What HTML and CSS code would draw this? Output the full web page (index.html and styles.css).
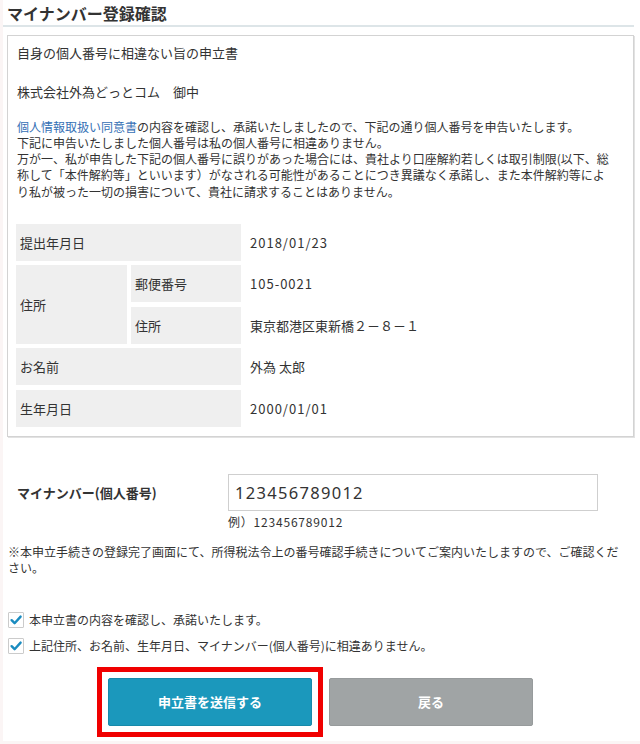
FILE: index.html
```html
<!DOCTYPE html>
<html lang="ja">
<head>
<meta charset="utf-8">
<title>マイナンバー登録確認</title>
<link rel="stylesheet" href="styles.css">
</head>
<body>
<div class="page">
  <h1 class="title">マイナンバー登録確認</h1>

  <section class="box">
    <p class="doc-title">自身の個人番号に相違ない旨の申立書</p>
    <p class="addressee">株式会社外為どっとコム　御中</p>
    <p class="statement"><a class="link" href="#">個人情報取扱い同意書</a>の内容を確認し、承諾いたしましたので、下記の通り個人番号を申告いたします。<br>下記に申告いたしました個人番号は私の個人番号に相違ありません。<br>万が一、私が申告した下記の個人番号に誤りがあった場合には、貴社より口座解約若しくは取引制限(以下、総称して「本件解約等」といいます）がなされる可能性があることにつき異議なく承諾し、また本件解約等により私が被った一切の損害について、貴社に請求することはありません。</p>

    <div class="info">
      <div class="cell label span2">提出年月日</div>
      <div class="cell value num">2018/01/23</div>

      <div class="cell label rowspan2">住所</div>
      <div class="cell label">郵便番号</div>
      <div class="cell value num">105-0021</div>
      <div class="cell label">住所</div>
      <div class="cell value">東京都港区東新橋２－８－１</div>

      <div class="cell label span2">お名前</div>
      <div class="cell value">外為 太郎</div>

      <div class="cell label span2">生年月日</div>
      <div class="cell value num">2000/01/01</div>
    </div>
  </section>

  <div class="form-row">
    <div class="form-label">マイナンバー(個人番号)</div>
    <div class="form-field">
      <input class="number-input" type="text" value="123456789012" readonly>
      <div class="example">例）123456789012</div>
    </div>
  </div>

  <p class="note">※本申立手続きの登録完了画面にて、所得税法令上の番号確認手続きについてご案内いたしますので、ご確認ください。</p>

  <div class="checks">
    <label class="check-row">
      <span class="checkbox"><svg width="16" height="16" viewBox="0 0 16 16"><path d="M3.6 8.2 L6.6 11.2 L12.6 4.6" fill="none" stroke="#1a8cc0" stroke-width="2.4" stroke-linecap="round" stroke-linejoin="round"/></svg></span>
      <span class="check-text">本申立書の内容を確認し、承諾いたします。</span>
    </label>
    <label class="check-row">
      <span class="checkbox"><svg width="16" height="16" viewBox="0 0 16 16"><path d="M3.6 8.2 L6.6 11.2 L12.6 4.6" fill="none" stroke="#1a8cc0" stroke-width="2.4" stroke-linecap="round" stroke-linejoin="round"/></svg></span>
      <span class="check-text">上記住所、お名前、生年月日、マイナンバー(個人番号)に相違ありません。</span>
    </label>
  </div>

  <div class="actions">
    <div class="highlight">
      <button class="btn btn-submit" type="button">申立書を送信する</button>
    </div>
    <button class="btn btn-back" type="button">戻る</button>
  </div>
</div>
</body>
</html>
```
FILE: styles.css
```css
html, body {
  margin: 0;
  padding: 0;
}

body {
  background: #fbf5f5;
  font-family: "Noto Sans CJK JP", "Noto Sans", sans-serif;
  color: #333;
}

.page {
  margin-left: 3px;
  background: #fff;
  min-height: 741px;
  overflow: hidden;
}

.title {
  margin: 0 6px 0 0;
  padding: 3px 4px 2px 4px;
  font-size: 16px;
  line-height: 20px;
  font-weight: bold;
  color: #333;
  border-bottom: 2px solid #dde5e8;
}

.box {
  margin: 8px 6px 0 4px;
  border: 1px solid #d3d3d3;
  box-shadow: 1px 1px 0 #e2e2e2;
  padding: 7px 20px 9px 9px;
}

.box p {
  margin: 0;
}

.doc-title,
.addressee {
  font-size: 13px;
  line-height: 20px;
}

.addressee {
  margin-top: 19px !important;
}

.statement {
  margin-top: 16.5px !important;
  font-size: 12px;
  line-height: 16.3px;
}

.link {
  color: #3570b5;
  text-decoration: none;
}

.info {
  margin: 24px 0 0 -1px;
  display: grid;
  grid-template-columns: 111px 110px 1fr;
  grid-auto-rows: 37px;
  column-gap: 4px;
  row-gap: 4.5px;
  font-size: 13px;
}

.cell {
  display: flex;
  align-items: center;
}

.label {
  background: #efefef;
  padding-left: 4px;
}

.value {
  padding-left: 5px;
}

.num {
  letter-spacing: 1px;
}

.span2 {
  grid-column: span 2;
}

.rowspan2 {
  grid-row: span 2;
}

.form-row {
  margin-top: 37px;
  display: flex;
  align-items: flex-start;
}

.form-label {
  width: 211px;
  padding-left: 14px;
  font-size: 13px;
  font-weight: bold;
  line-height: 37px;
}

.number-input {
  display: block;
  box-sizing: border-box;
  width: 370px;
  height: 37px;
  margin: 0;
  border: 1px solid #cfcfcf;
  padding: 0 6px;
  font-family: "Noto Sans", sans-serif;
  font-size: 16.5px;
  letter-spacing: 1.3px;
  color: #333;
  background: #fff;
  outline: none;
}

.example {
  margin-top: 3px;
  font-size: 12px;
  line-height: 16px;
  letter-spacing: 0.8px;
}

.note {
  margin: 14px 14px 0 5px;
  font-size: 12px;
  line-height: 16.5px;
}

.checks {
  margin: 33px 0 0 5px;
  display: flex;
  flex-direction: column;
  gap: 6px;
}

.check-row {
  display: flex;
  align-items: center;
  height: 20px;
  gap: 5px;
  font-size: 12px;
}

.checkbox {
  box-sizing: border-box;
  width: 16px;
  height: 16px;
  border: 1px solid #cbcbcb;
  border-radius: 1px;
  background: #fff;
  display: flex;
  align-items: center;
  justify-content: center;
}

.checkbox svg {
  display: block;
  margin: -1px;
}

.actions {
  margin-top: 11px;
  padding-left: 94px;
  display: flex;
  align-items: center;
  gap: 6px;
}

.highlight {
  border: 5px solid #f00000;
  padding: 6px;
  display: flex;
}

.btn {
  width: 204px;
  height: 48px;
  margin: 0;
  border-radius: 2px;
  font-family: "Noto Sans CJK JP", sans-serif;
  font-size: 13px;
  font-weight: bold;
  color: #fff;
  cursor: pointer;
}

.btn-submit {
  background: #1b98bc;
  border: 1px solid #178aaa;
}

.btn-back {
  background: #a0a4a5;
  border: 1px solid #979b9c;
}
```
